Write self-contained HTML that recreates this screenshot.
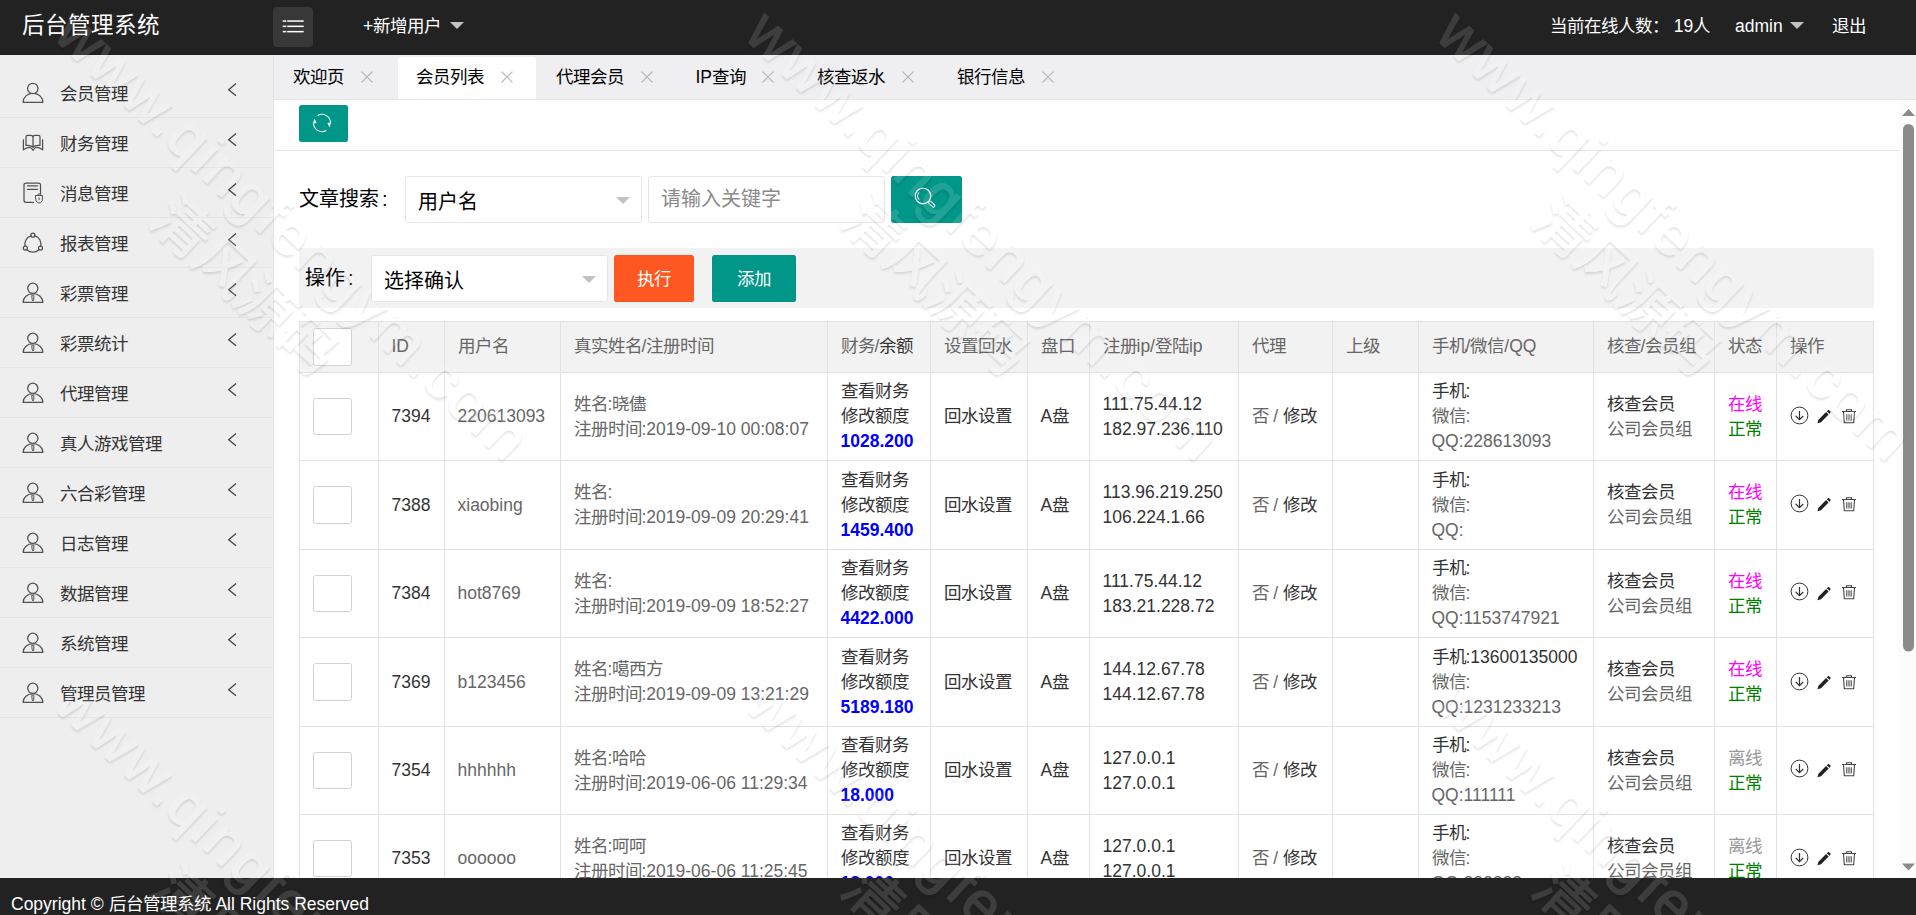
<!DOCTYPE html>
<html lang="zh-CN">
<head>
<meta charset="utf-8">
<title>后台管理系统</title>
<style>
*{box-sizing:border-box;margin:0;padding:0}
html,body{width:1916px;height:915px;overflow:hidden;background:#fff}
body{font-family:"Liberation Sans",sans-serif;font-size:17.5px;color:#333;position:relative;line-height:25px}
.abs{position:absolute}
#hdr{position:absolute;left:0;top:0;width:1916px;height:55px;background:#222;color:#fff}
#hdr .t{position:absolute;white-space:nowrap;line-height:25px;top:14px;font-size:17.5px}
#logo{left:22px;top:12px!important;font-size:22.5px!important;line-height:28px!important}
#mbtn{position:absolute;left:273px;top:7px;width:40px;height:40px;border-radius:4px;background:#383838}
.caret{position:absolute;width:0;height:0;border-left:7px solid transparent;border-right:7px solid transparent;border-top:7px solid #c2c2c2;top:21.5px}
#side{position:absolute;left:0;top:55px;width:274px;height:823px;background:#eee;border-right:1px solid #e5e5e5;padding-top:13px}
#side .it{position:relative;height:50px;border-bottom:1px solid #e4e4e4;}
#side .it span{position:absolute;left:60px;top:14px;line-height:25px;color:#333;white-space:nowrap}
#side .it svg.ic{position:absolute;left:21px;top:13px}
#side .it svg.ar{position:absolute;left:226px;top:12px}
#tabs{position:absolute;left:274px;top:55px;width:1642px;height:45px;background:#efeef0;border-bottom:1px solid #e6e6e6}
#tabs .tb{position:absolute;top:2px;height:43px;line-height:41px;white-space:nowrap;color:#000}
#tabs .tb.on{background:#fff;border-radius:3px 3px 0 0;height:42px;margin-left:1px;margin-right:0.5px}
#tabs .tb b{position:absolute;left:18.75px;top:0;font-weight:normal}
#tabs .tb svg{position:absolute;top:14px}
#main{position:absolute;left:274px;top:100px;width:1625px;height:778px;overflow:hidden;background:#fff}
#sb{position:absolute;left:1899px;top:100px;width:17px;height:778px;background:#fcfcfc}
#ftr{position:absolute;left:0;top:878px;width:1916px;height:37px;background:#222;color:#fff;line-height:37px;padding-left:11px;font-size:17.5px;white-space:nowrap;padding-top:8px}

#main .btn{position:absolute;border-radius:2.5px;color:#fff;text-align:center;font-size:17.5px;white-space:nowrap}
#main .sel{position:absolute;height:47px;border:1px solid #e6e6e6;border-radius:2.5px;background:#fff;font-size:20px;color:#000;white-space:nowrap}
#main .sel span{position:absolute;left:12px;top:13px;line-height:25px}
#main .sel i{position:absolute;width:0;height:0;border-left:7px solid transparent;border-right:7px solid transparent;border-top:7px solid #c2c2c2;top:20px}
#main .lab{position:absolute;font-size:20px;color:#000;white-space:nowrap;line-height:25px}
table.tb{position:absolute;left:25px;top:221px;width:1575px;border-collapse:collapse;table-layout:fixed;font-size:17.5px;line-height:25px;color:#666}
table.tb th,table.tb td{border:1px solid #e2e2e2;padding:0 0 0 12.5px;text-align:left;font-weight:normal;white-space:nowrap;overflow:hidden;vertical-align:middle}
table.tb th{background:#f2f2f2;height:51px;padding-bottom:2px}
table.tb td{height:88.4px}
table.tb .d{color:#333}
table.tb .bl{color:#0000ff;font-weight:bold}
table.tb .on{color:#ff00ff}
table.tb .ok{color:#008000}
table.tb .off{color:#999}
.cb{display:block;width:38.700px;height:37.500px;border:1px solid #d2d2d2;border-radius:2.5px;background:#fff;margin-left:0.800px}
table.tb tr.r4 td+td{padding-top:2px}
table.tb tr.r4 td.l2{padding-top:0}
table.tb tr.r3 td.l2,table.tb tr.r5 td.l2{padding-top:2px}
table.tb th .cb{position:relative;top:1px}
.ops{display:block;position:relative;height:20px;top:-1px}
.ops svg{position:absolute;top:0}
</style>
</head>
<body>
<div id="hdr">
  <div class="t" id="logo">后台管理系统</div>
  <div id="mbtn"><svg width="40" height="40" viewBox="0 0 40 40"><g fill="#fff"><rect x="9.700" y="13.300" width="3.600" height="1.500"/><rect x="14.200" y="13.300" width="16.500" height="1.500"/><rect x="9.700" y="18.600" width="3.600" height="1.500"/><rect x="14.200" y="18.600" width="16.500" height="1.500"/><rect x="9.700" y="23.900" width="3.600" height="1.500"/><rect x="14.200" y="23.900" width="16.500" height="1.500"/></g></svg></div>
  <div class="t" style="left:363px">+新增用户</div><i class="caret" style="left:450px"></i>
  <div class="t" style="left:1550px">当前在线人数： 19人</div>
  <div class="t" style="left:1735px">admin</div><i class="caret" style="left:1790px"></i>
  <div class="t" style="left:1832px">退出</div>
</div>
<div id="side"><div class="it"><svg class="ic" width="24" height="24" viewBox="0 0 24 24" fill="none" stroke="#505050" stroke-width="1.25" stroke-linecap="round" stroke-linejoin="round"><path d="M2.100 21.300 A9.900 9.100 0 0 1 21.900 21.300 Z"/><circle cx="11.800" cy="7.450" r="5.200" fill="#eee"/></svg><span>会员管理</span><svg class="ar" width="14" height="20" viewBox="0 0 14 20" fill="none" stroke="#444" stroke-width="1.3"><path d="M10 3.600 L2.700 9.700 L10 15.800"/></svg></div><div class="it"><svg class="ic" width="24" height="24" viewBox="0 0 24 24" fill="none" stroke="#505050" stroke-width="1.25" stroke-linecap="round" stroke-linejoin="round"><path d="M12 6.400 C12 5.200 11 4.400 9.800 4.400 H6.700 C5.600 4.400 5 5 5 6 V14.400 C7.200 14.100 10.200 14.400 12 16.300 C13.800 14.400 16.800 14.100 19 14.400 V6 C19 5 18.400 4.400 17.300 4.400 H14.200 C13 4.400 12 5.200 12 6.400 V16.300"/><path d="M2.400 8.900 V18.800 C5 17.100 8 16 9.600 16.700 C10.700 17.200 11.400 18.400 12 19.300 C12.600 18.400 13.300 17.200 14.400 16.700 C16 16 19 17.100 21.600 18.800 V8.900"/></svg><span>财务管理</span><svg class="ar" width="14" height="20" viewBox="0 0 14 20" fill="none" stroke="#444" stroke-width="1.3"><path d="M10 3.600 L2.700 9.700 L10 15.800"/></svg></div><div class="it"><svg class="ic" width="24" height="24" viewBox="0 0 24 24" fill="none" stroke="#505050" stroke-width="1.25" stroke-linecap="round" stroke-linejoin="round"><path d="M12.500 21.300 H5 C3.800 21.300 3 20.500 3 19.300 V4 C3 2.800 3.800 2 5 2 H17.500 C18.700 2 19.500 2.800 19.500 4 V12.500 M6.500 4.800 H16.500 M6.500 8.300 H16.500"/><path d="M14.800 14.500 H21.400 V19.300 C21.400 20.500 19.500 21.600 18.100 22 C16.700 21.600 14.800 20.500 14.800 19.300 Z M16.600 14.500 V13.800 C16.600 12.600 19.600 12.600 19.600 13.800 V14.500 M18.100 16.800 V18.800" stroke-width="1"/></svg><span>消息管理</span><svg class="ar" width="14" height="20" viewBox="0 0 14 20" fill="none" stroke="#444" stroke-width="1.3"><path d="M10 3.600 L2.700 9.700 L10 15.800"/></svg></div><div class="it"><svg class="ic" width="24" height="24" viewBox="0 0 24 24" fill="none" stroke="#505050" stroke-width="1.25" stroke-linecap="round" stroke-linejoin="round"><path d="M9.900 4.800 C5.500 6.100 3.300 10.600 4 15.200 M13.900 4.800 C18.300 6.100 20.500 10.600 19.800 15.200 M5.900 18.700 C8.900 21.900 14.900 21.900 17.900 18.700"/><circle cx="11.900" cy="4.200" r="2"/><circle cx="4.300" cy="17.100" r="2"/><circle cx="19.500" cy="17.100" r="2"/></svg><span>报表管理</span><svg class="ar" width="14" height="20" viewBox="0 0 14 20" fill="none" stroke="#444" stroke-width="1.3"><path d="M10 3.600 L2.700 9.700 L10 15.800"/></svg></div><div class="it"><svg class="ic" width="24" height="24" viewBox="0 0 24 24" fill="none" stroke="#505050" stroke-width="1.25" stroke-linecap="round" stroke-linejoin="round"><path d="M2.100 21.300 A9.900 8.600 0 0 1 21.900 21.300 Z"/><circle cx="11.800" cy="7.300" r="5.100" fill="#eee"/><path d="M11.200 14.200 H12.800 V18.400 L12 20 L11.200 18.400 Z" stroke-width="1"/></svg><span>彩票管理</span><svg class="ar" width="14" height="20" viewBox="0 0 14 20" fill="none" stroke="#444" stroke-width="1.3"><path d="M10 3.600 L2.700 9.700 L10 15.800"/></svg></div><div class="it"><svg class="ic" width="24" height="24" viewBox="0 0 24 24" fill="none" stroke="#505050" stroke-width="1.25" stroke-linecap="round" stroke-linejoin="round"><path d="M2.100 21.300 A9.900 8.600 0 0 1 21.900 21.300 Z"/><circle cx="11.800" cy="7.300" r="5.100" fill="#eee"/><path d="M11.200 14.200 H12.800 V18.400 L12 20 L11.200 18.400 Z" stroke-width="1"/></svg><span>彩票统计</span><svg class="ar" width="14" height="20" viewBox="0 0 14 20" fill="none" stroke="#444" stroke-width="1.3"><path d="M10 3.600 L2.700 9.700 L10 15.800"/></svg></div><div class="it"><svg class="ic" width="24" height="24" viewBox="0 0 24 24" fill="none" stroke="#505050" stroke-width="1.25" stroke-linecap="round" stroke-linejoin="round"><path d="M2.100 21.300 A9.900 8.600 0 0 1 21.900 21.300 Z"/><circle cx="11.800" cy="7.300" r="5.100" fill="#eee"/><path d="M11.200 14.200 H12.800 V18.400 L12 20 L11.200 18.400 Z" stroke-width="1"/></svg><span>代理管理</span><svg class="ar" width="14" height="20" viewBox="0 0 14 20" fill="none" stroke="#444" stroke-width="1.3"><path d="M10 3.600 L2.700 9.700 L10 15.800"/></svg></div><div class="it"><svg class="ic" width="24" height="24" viewBox="0 0 24 24" fill="none" stroke="#505050" stroke-width="1.25" stroke-linecap="round" stroke-linejoin="round"><path d="M2.100 21.300 A9.900 8.600 0 0 1 21.900 21.300 Z"/><circle cx="11.800" cy="7.300" r="5.100" fill="#eee"/><path d="M11.200 14.200 H12.800 V18.400 L12 20 L11.200 18.400 Z" stroke-width="1"/></svg><span>真人游戏管理</span><svg class="ar" width="14" height="20" viewBox="0 0 14 20" fill="none" stroke="#444" stroke-width="1.3"><path d="M10 3.600 L2.700 9.700 L10 15.800"/></svg></div><div class="it"><svg class="ic" width="24" height="24" viewBox="0 0 24 24" fill="none" stroke="#505050" stroke-width="1.25" stroke-linecap="round" stroke-linejoin="round"><path d="M2.100 21.300 A9.900 8.600 0 0 1 21.900 21.300 Z"/><circle cx="11.800" cy="7.300" r="5.100" fill="#eee"/><path d="M11.200 14.200 H12.800 V18.400 L12 20 L11.200 18.400 Z" stroke-width="1"/></svg><span>六合彩管理</span><svg class="ar" width="14" height="20" viewBox="0 0 14 20" fill="none" stroke="#444" stroke-width="1.3"><path d="M10 3.600 L2.700 9.700 L10 15.800"/></svg></div><div class="it"><svg class="ic" width="24" height="24" viewBox="0 0 24 24" fill="none" stroke="#505050" stroke-width="1.25" stroke-linecap="round" stroke-linejoin="round"><path d="M2.100 21.300 A9.900 8.600 0 0 1 21.900 21.300 Z"/><circle cx="11.800" cy="7.300" r="5.100" fill="#eee"/><path d="M11.200 14.200 H12.800 V18.400 L12 20 L11.200 18.400 Z" stroke-width="1"/></svg><span>日志管理</span><svg class="ar" width="14" height="20" viewBox="0 0 14 20" fill="none" stroke="#444" stroke-width="1.3"><path d="M10 3.600 L2.700 9.700 L10 15.800"/></svg></div><div class="it"><svg class="ic" width="24" height="24" viewBox="0 0 24 24" fill="none" stroke="#505050" stroke-width="1.25" stroke-linecap="round" stroke-linejoin="round"><path d="M2.100 21.300 A9.900 8.600 0 0 1 21.900 21.300 Z"/><circle cx="11.800" cy="7.300" r="5.100" fill="#eee"/><path d="M11.200 14.200 H12.800 V18.400 L12 20 L11.200 18.400 Z" stroke-width="1"/></svg><span>数据管理</span><svg class="ar" width="14" height="20" viewBox="0 0 14 20" fill="none" stroke="#444" stroke-width="1.3"><path d="M10 3.600 L2.700 9.700 L10 15.800"/></svg></div><div class="it"><svg class="ic" width="24" height="24" viewBox="0 0 24 24" fill="none" stroke="#505050" stroke-width="1.25" stroke-linecap="round" stroke-linejoin="round"><path d="M2.100 21.300 A9.900 8.600 0 0 1 21.900 21.300 Z"/><circle cx="11.800" cy="7.300" r="5.100" fill="#eee"/><path d="M11.200 14.200 H12.800 V18.400 L12 20 L11.200 18.400 Z" stroke-width="1"/></svg><span>系统管理</span><svg class="ar" width="14" height="20" viewBox="0 0 14 20" fill="none" stroke="#444" stroke-width="1.3"><path d="M10 3.600 L2.700 9.700 L10 15.800"/></svg></div><div class="it"><svg class="ic" width="24" height="24" viewBox="0 0 24 24" fill="none" stroke="#505050" stroke-width="1.25" stroke-linecap="round" stroke-linejoin="round"><path d="M2.100 21.300 A9.900 8.600 0 0 1 21.900 21.300 Z"/><circle cx="11.800" cy="7.300" r="5.100" fill="#eee"/><path d="M11.200 14.200 H12.800 V18.400 L12 20 L11.200 18.400 Z" stroke-width="1"/></svg><span>管理员管理</span><svg class="ar" width="14" height="20" viewBox="0 0 14 20" fill="none" stroke="#444" stroke-width="1.3"><path d="M10 3.600 L2.700 9.700 L10 15.800"/></svg></div></div>
<div id="tabs"><div class="tb" style="left:0.25px;width:122.5px"><b style="left:18.75px">欢迎页</b><svg width="12" height="12" viewBox="0 0 13 13" style="left:86.25px" stroke="#b5b5b5" stroke-width="1.3"><path d="M0.600 0.600 L12.400 12.400 M12.400 0.600 L0.600 12.400"/></svg></div><div class="tb on" style="left:122.75px;width:138.5px"><b style="left:17.75px">会员列表</b><svg width="12" height="12" viewBox="0 0 13 13" style="left:102.75px" stroke="#b5b5b5" stroke-width="1.3"><path d="M0.600 0.600 L12.400 12.400 M12.400 0.600 L0.600 12.400"/></svg></div><div class="tb" style="left:262.75px;width:140px"><b style="left:18.75px">代理会员</b><svg width="12" height="12" viewBox="0 0 13 13" style="left:103.75px" stroke="#b5b5b5" stroke-width="1.3"><path d="M0.600 0.600 L12.400 12.400 M12.400 0.600 L0.600 12.400"/></svg></div><div class="tb" style="left:402.75px;width:121.5px"><b style="left:18.75px">IP查询</b><svg width="12" height="12" viewBox="0 0 13 13" style="left:85.25px" stroke="#b5b5b5" stroke-width="1.3"><path d="M0.600 0.600 L12.400 12.400 M12.400 0.600 L0.600 12.400"/></svg></div><div class="tb" style="left:524.25px;width:140px"><b style="left:18.75px">核查返水</b><svg width="12" height="12" viewBox="0 0 13 13" style="left:103.75px" stroke="#b5b5b5" stroke-width="1.3"><path d="M0.600 0.600 L12.400 12.400 M12.400 0.600 L0.600 12.400"/></svg></div><div class="tb" style="left:664.25px;width:140px"><b style="left:18.75px">银行信息</b><svg width="12" height="12" viewBox="0 0 13 13" style="left:103.75px" stroke="#b5b5b5" stroke-width="1.3"><path d="M0.600 0.600 L12.400 12.400 M12.400 0.600 L0.600 12.400"/></svg></div></div>
<div id="main">
<div class="btn" style="left:25px;top:5px;width:49px;height:37px;background:#009688"><svg width="22" height="22" viewBox="0 0 22 22" style="position:absolute;left:11.600px;top:6.600px" fill="none" stroke="#fff" stroke-width="1.050"><path d="M6.700 3.550 A8.600 8.600 0 0 1 19.550 10.200"/><path d="M15.300 18.450 A8.600 8.600 0 0 1 2.450 11.800"/><path d="M16.400 10.900 L20.300 10.300 L18.400 15.300 Z" fill="#fff" stroke="none"/><path d="M5.600 11.100 L1.700 11.700 L3.600 6.700 Z" fill="#fff" stroke="none"/></svg></div>
<div style="position:absolute;left:0;top:50px;width:1625px;height:1px;background:#e5e5e5"></div>
<div class="lab" style="left:25px;top:86.5px">文章搜索<span style="margin-left:3px">:</span></div>
<div class="sel" style="left:131px;top:76px;width:237px"><span>用户名</span><i style="left:210px"></i></div>
<div class="sel" style="left:374px;top:76px;width:237px"><span style="color:#8a8a8a;top:10px">请输入关键字</span></div>
<div class="btn" style="left:617px;top:76px;width:71px;height:47px;background:#009688"><svg width="30" height="30" viewBox="-15 -15 30 30" style="position:absolute;left:17.100px;top:5.200px" fill="none" stroke="#fff"><circle cx="0" cy="0" r="7.800" stroke-width="1.150"/><path d="M-3.900 -3.600 A5.300 5.300 0 0 0 -3.900 3.600" stroke-width="1.100"/><g transform="rotate(43)"><rect x="8.100" y="-1.400" width="7.500" height="2.800" rx="1.400" stroke-width="1"/></g></svg></div>
<div style="position:absolute;left:25px;top:148px;width:1575px;height:60px;background:#f2f2f2;border-radius:0 2.5px 2.5px 0"></div>
<div class="lab" style="left:31px;top:165.5px">操作<span style="margin-left:3px">:</span></div>
<div class="sel" style="left:97px;top:155px;width:237px;height:47px"><span style="top:13px">选择确认</span><i style="left:210px;top:20px"></i></div>
<div class="btn" style="left:340px;top:155px;width:80px;height:47px;line-height:48px;background:#ff5722">执行</div>
<div class="btn" style="left:438px;top:155px;width:84px;height:47px;line-height:48px;background:#009688">添加</div>
<table class="tb"><colgroup><col style="width:79px"><col style="width:66px"><col style="width:116px"><col style="width:267px"><col style="width:103px"><col style="width:97px"><col style="width:62px"><col style="width:149px"><col style="width:94px"><col style="width:86px"><col style="width:175px"><col style="width:121px"><col style="width:62px"><col style="width:97px"></colgroup><tr><th><i class="cb"></i></th><th>ID</th><th>用户名</th><th>真实姓名/注册时间</th><th>财务/<span class="d">余额</span></th><th>设置回水</th><th>盘口</th><th>注册ip/登陆ip</th><th>代理</th><th>上级</th><th>手机/微信/QQ</th><th>核查/会员组</th><th>状态</th><th>操作</th></tr><tr class="r1"><td><i class="cb"></i></td><td class="d">7394</td><td>220613093</td><td class="l2">姓名:晓儘<br>注册时间:2019-09-10 00:08:07</td><td><span class="d">查看财务<br>修改额度</span><br><span class="bl">1028.200</span></td><td class="d">回水设置</td><td class="d">A盘</td><td class="d l2">111.75.44.12<br>182.97.236.110</td><td>否 / <span class="d">修改</span></td><td></td><td><span class="d">手机:</span><br>微信:<br>QQ:228613093</td><td class="l2"><span class="d">核查会员</span><br>公司会员组</td><td class="l2"><span class="on">在线</span><br><span class="ok">正常</span></td><td><span class="ops"><svg width="19" height="19" viewBox="0 0 19 19" style="left:0px" fill="none" stroke="#333" stroke-width="1"><circle cx="9.500" cy="9.500" r="8.400"/><path d="M9.500 5 V13.500 M5.800 10 L9.500 13.700 L13.200 10" stroke-width="1.200"/></svg><svg width="15.200" height="15.200" viewBox="0 0 16 16" style="left:26px;top:3.300px" fill="#222"><path d="M1.500 15 L2.600 11.200 L10.600 3.200 L13.300 5.900 L5.300 13.900 Z M11.400 2.400 L12.300 1.500 C12.800 1 13.500 1 14 1.500 L15 2.500 C15.500 3 15.500 3.700 15 4.200 L14.100 5.100 Z"/></svg><svg width="16" height="16" viewBox="0 0 16 16" style="left:51.500px;top:2px" fill="none" stroke="#444" stroke-width="1.100"><path d="M1 3.500 H15 M5.500 3.300 V1.800 H10.500 V3.300 M2.500 3.800 L3.300 14.800 H12.700 L13.500 3.800 M5.800 6.200 V12.500 M8 6.200 V12.500 M10.200 6.200 V12.500"/></svg></span></td></tr><tr class="r2"><td><i class="cb"></i></td><td class="d">7388</td><td>xiaobing</td><td class="l2">姓名:<br>注册时间:2019-09-09 20:29:41</td><td><span class="d">查看财务<br>修改额度</span><br><span class="bl">1459.400</span></td><td class="d">回水设置</td><td class="d">A盘</td><td class="d l2">113.96.219.250<br>106.224.1.66</td><td>否 / <span class="d">修改</span></td><td></td><td><span class="d">手机:</span><br>微信:<br>QQ:</td><td class="l2"><span class="d">核查会员</span><br>公司会员组</td><td class="l2"><span class="on">在线</span><br><span class="ok">正常</span></td><td><span class="ops"><svg width="19" height="19" viewBox="0 0 19 19" style="left:0px" fill="none" stroke="#333" stroke-width="1"><circle cx="9.500" cy="9.500" r="8.400"/><path d="M9.500 5 V13.500 M5.800 10 L9.500 13.700 L13.200 10" stroke-width="1.200"/></svg><svg width="15.200" height="15.200" viewBox="0 0 16 16" style="left:26px;top:3.300px" fill="#222"><path d="M1.500 15 L2.600 11.200 L10.600 3.200 L13.300 5.900 L5.300 13.900 Z M11.400 2.400 L12.300 1.500 C12.800 1 13.500 1 14 1.500 L15 2.500 C15.500 3 15.500 3.700 15 4.200 L14.100 5.100 Z"/></svg><svg width="16" height="16" viewBox="0 0 16 16" style="left:51.500px;top:2px" fill="none" stroke="#444" stroke-width="1.100"><path d="M1 3.500 H15 M5.500 3.300 V1.800 H10.500 V3.300 M2.500 3.800 L3.300 14.800 H12.700 L13.500 3.800 M5.800 6.200 V12.500 M8 6.200 V12.500 M10.200 6.200 V12.500"/></svg></span></td></tr><tr class="r3"><td><i class="cb"></i></td><td class="d">7384</td><td>hot8769</td><td class="l2">姓名:<br>注册时间:2019-09-09 18:52:27</td><td><span class="d">查看财务<br>修改额度</span><br><span class="bl">4422.000</span></td><td class="d">回水设置</td><td class="d">A盘</td><td class="d l2">111.75.44.12<br>183.21.228.72</td><td>否 / <span class="d">修改</span></td><td></td><td><span class="d">手机:</span><br>微信:<br>QQ:1153747921</td><td class="l2"><span class="d">核查会员</span><br>公司会员组</td><td class="l2"><span class="on">在线</span><br><span class="ok">正常</span></td><td><span class="ops"><svg width="19" height="19" viewBox="0 0 19 19" style="left:0px" fill="none" stroke="#333" stroke-width="1"><circle cx="9.500" cy="9.500" r="8.400"/><path d="M9.500 5 V13.500 M5.800 10 L9.500 13.700 L13.200 10" stroke-width="1.200"/></svg><svg width="15.200" height="15.200" viewBox="0 0 16 16" style="left:26px;top:3.300px" fill="#222"><path d="M1.500 15 L2.600 11.200 L10.600 3.200 L13.300 5.900 L5.300 13.900 Z M11.400 2.400 L12.300 1.500 C12.800 1 13.500 1 14 1.500 L15 2.500 C15.500 3 15.500 3.700 15 4.200 L14.100 5.100 Z"/></svg><svg width="16" height="16" viewBox="0 0 16 16" style="left:51.500px;top:2px" fill="none" stroke="#444" stroke-width="1.100"><path d="M1 3.500 H15 M5.500 3.300 V1.800 H10.500 V3.300 M2.500 3.800 L3.300 14.800 H12.700 L13.500 3.800 M5.800 6.200 V12.500 M8 6.200 V12.500 M10.200 6.200 V12.500"/></svg></span></td></tr><tr class="r4"><td><i class="cb"></i></td><td class="d">7369</td><td>b123456</td><td class="l2">姓名:噶西方<br>注册时间:2019-09-09 13:21:29</td><td><span class="d">查看财务<br>修改额度</span><br><span class="bl">5189.180</span></td><td class="d">回水设置</td><td class="d">A盘</td><td class="d l2">144.12.67.78<br>144.12.67.78</td><td>否 / <span class="d">修改</span></td><td></td><td><span class="d">手机:13600135000</span><br>微信:<br>QQ:1231233213</td><td class="l2"><span class="d">核查会员</span><br>公司会员组</td><td class="l2"><span class="on">在线</span><br><span class="ok">正常</span></td><td><span class="ops"><svg width="19" height="19" viewBox="0 0 19 19" style="left:0px" fill="none" stroke="#333" stroke-width="1"><circle cx="9.500" cy="9.500" r="8.400"/><path d="M9.500 5 V13.500 M5.800 10 L9.500 13.700 L13.200 10" stroke-width="1.200"/></svg><svg width="15.200" height="15.200" viewBox="0 0 16 16" style="left:26px;top:3.300px" fill="#222"><path d="M1.500 15 L2.600 11.200 L10.600 3.200 L13.300 5.900 L5.300 13.900 Z M11.400 2.400 L12.300 1.500 C12.800 1 13.500 1 14 1.500 L15 2.500 C15.500 3 15.500 3.700 15 4.200 L14.100 5.100 Z"/></svg><svg width="16" height="16" viewBox="0 0 16 16" style="left:51.500px;top:2px" fill="none" stroke="#444" stroke-width="1.100"><path d="M1 3.500 H15 M5.500 3.300 V1.800 H10.500 V3.300 M2.500 3.800 L3.300 14.800 H12.700 L13.500 3.800 M5.800 6.200 V12.500 M8 6.200 V12.500 M10.200 6.200 V12.500"/></svg></span></td></tr><tr class="r5"><td><i class="cb"></i></td><td class="d">7354</td><td>hhhhhh</td><td class="l2">姓名:哈哈<br>注册时间:2019-06-06 11:29:34</td><td><span class="d">查看财务<br>修改额度</span><br><span class="bl">18.000</span></td><td class="d">回水设置</td><td class="d">A盘</td><td class="d l2">127.0.0.1<br>127.0.0.1</td><td>否 / <span class="d">修改</span></td><td></td><td><span class="d">手机:</span><br>微信:<br>QQ:111111</td><td class="l2"><span class="d">核查会员</span><br>公司会员组</td><td class="l2"><span class="off">离线</span><br><span class="ok">正常</span></td><td><span class="ops"><svg width="19" height="19" viewBox="0 0 19 19" style="left:0px" fill="none" stroke="#333" stroke-width="1"><circle cx="9.500" cy="9.500" r="8.400"/><path d="M9.500 5 V13.500 M5.800 10 L9.500 13.700 L13.200 10" stroke-width="1.200"/></svg><svg width="15.200" height="15.200" viewBox="0 0 16 16" style="left:26px;top:3.300px" fill="#222"><path d="M1.500 15 L2.600 11.200 L10.600 3.200 L13.300 5.900 L5.300 13.900 Z M11.400 2.400 L12.300 1.500 C12.800 1 13.500 1 14 1.500 L15 2.500 C15.500 3 15.500 3.700 15 4.200 L14.100 5.100 Z"/></svg><svg width="16" height="16" viewBox="0 0 16 16" style="left:51.500px;top:2px" fill="none" stroke="#444" stroke-width="1.100"><path d="M1 3.500 H15 M5.500 3.300 V1.800 H10.500 V3.300 M2.500 3.800 L3.300 14.800 H12.700 L13.500 3.800 M5.800 6.200 V12.500 M8 6.200 V12.500 M10.200 6.200 V12.500"/></svg></span></td></tr><tr class="r6"><td><i class="cb"></i></td><td class="d">7353</td><td>oooooo</td><td class="l2">姓名:呵呵<br>注册时间:2019-06-06 11:25:45</td><td><span class="d">查看财务<br>修改额度</span><br><span class="bl">18.000</span></td><td class="d">回水设置</td><td class="d">A盘</td><td class="d l2">127.0.0.1<br>127.0.0.1</td><td>否 / <span class="d">修改</span></td><td></td><td><span class="d">手机:</span><br>微信:<br>QQ:222222</td><td class="l2"><span class="d">核查会员</span><br>公司会员组</td><td class="l2"><span class="off">离线</span><br><span class="ok">正常</span></td><td><span class="ops"><svg width="19" height="19" viewBox="0 0 19 19" style="left:0px" fill="none" stroke="#333" stroke-width="1"><circle cx="9.500" cy="9.500" r="8.400"/><path d="M9.500 5 V13.500 M5.800 10 L9.500 13.700 L13.200 10" stroke-width="1.200"/></svg><svg width="15.200" height="15.200" viewBox="0 0 16 16" style="left:26px;top:3.300px" fill="#222"><path d="M1.500 15 L2.600 11.200 L10.600 3.200 L13.300 5.900 L5.300 13.900 Z M11.400 2.400 L12.300 1.500 C12.800 1 13.500 1 14 1.500 L15 2.500 C15.500 3 15.500 3.700 15 4.200 L14.100 5.100 Z"/></svg><svg width="16" height="16" viewBox="0 0 16 16" style="left:51.500px;top:2px" fill="none" stroke="#444" stroke-width="1.100"><path d="M1 3.500 H15 M5.500 3.300 V1.800 H10.500 V3.300 M2.500 3.800 L3.300 14.800 H12.700 L13.500 3.800 M5.800 6.200 V12.500 M8 6.200 V12.500 M10.200 6.200 V12.500"/></svg></span></td></tr></table></div>
<div id="sb">
  <svg width="17" height="778" viewBox="0 0 17 778"><path d="M3 16 L9.5 9 L16 16Z" fill="#8b8b8b"/><rect x="4" y="24" width="11" height="527.5" rx="5.5" fill="#8b8b8b"/><path d="M3 763.5 L16 763.5 L9.5 770.5Z" fill="#8b8b8b"/></svg>
</div>
<div id="ftr">Copyright © 后台管理系统 All Rights Reserved</div>
<svg id="wm" width="1916" height="915" viewBox="0 0 1916 915" style="position:absolute;left:0;top:0;pointer-events:none;z-index:50"><defs><filter id="wf" x="0" y="0" width="1916" height="915" filterUnits="userSpaceOnUse"><feGaussianBlur in="SourceAlpha" stdDeviation="0.8" result="b"/><feOffset in="b" dx="0.2" dy="1.7" result="o"/><feComposite in="o" in2="SourceAlpha" operator="out" result="sh"/><feFlood flood-color="#000" flood-opacity="0.12" result="f1"/><feComposite in="f1" in2="sh" operator="in" result="shc"/><feFlood flood-color="#fff" flood-opacity="0.125" result="f2"/><feComposite in="f2" in2="SourceAlpha" operator="in" result="fc"/><feMerge><feMergeNode in="shc"/><feMergeNode in="fc"/></feMerge></filter></defs><g filter="url(#wf)" font-family="Liberation Sans, sans-serif" font-size="60" fill="#000" stroke="#000" stroke-width="1.3" stroke-linejoin="round" transform="translate(-2,0)"><text transform="translate(53.8,36.8) rotate(43.2)" textLength="622" lengthAdjust="spacing">www.qingfengym.com</text><text font-size="57" transform="translate(150.0,222.1) rotate(43.2)">清风源码</text><text transform="translate(744.8,36.8) rotate(43.2)" textLength="622" lengthAdjust="spacing">www.qingfengym.com</text><text font-size="57" transform="translate(841.0,222.1) rotate(43.2)">清风源码</text><text transform="translate(1435.8,36.8) rotate(43.2)" textLength="622" lengthAdjust="spacing">www.qingfengym.com</text><text font-size="57" transform="translate(1532.0,222.1) rotate(43.2)">清风源码</text><text transform="translate(53.8,706.2) rotate(43.2)" textLength="622" lengthAdjust="spacing">www.qingfengym.com</text><text font-size="57" transform="translate(150.0,891.5) rotate(43.2)">清风源码</text><text transform="translate(744.8,706.2) rotate(43.2)" textLength="622" lengthAdjust="spacing">www.qingfengym.com</text><text font-size="57" transform="translate(841.0,891.5) rotate(43.2)">清风源码</text><text transform="translate(1435.8,706.2) rotate(43.2)" textLength="622" lengthAdjust="spacing">www.qingfengym.com</text><text font-size="57" transform="translate(1532.0,891.5) rotate(43.2)">清风源码</text></g></svg>
</body>
</html>
